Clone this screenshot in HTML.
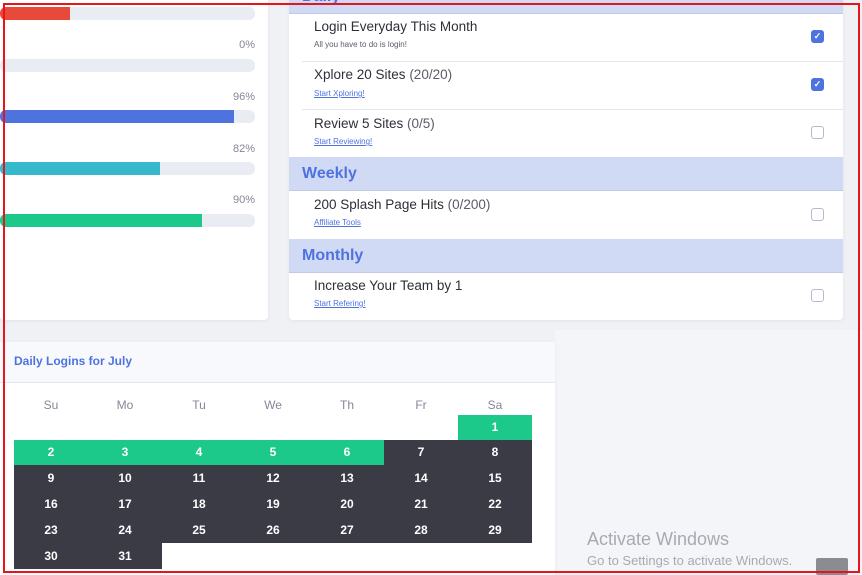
<!DOCTYPE html>
<html><head><meta charset="utf-8"><style>
*{margin:0;padding:0;box-sizing:border-box}
html,body{width:862px;height:575px;overflow:hidden}
body{background:#f0f1f5;font-family:"Liberation Sans",sans-serif;position:relative}
.a{position:absolute}
.card{background:#fff;border-radius:4px;box-shadow:0 1px 4px rgba(0,0,0,.06)}
.track{position:absolute;left:0;width:255px;height:13px;background:#eaecf4;border-radius:6px;overflow:hidden}
.track div{height:100%}
.pct{position:absolute;right:607px;font-size:11px;color:#858796}
.band{position:absolute;left:289px;width:554px;background:#d1daf5;border-bottom:1px solid #c3cbe3;color:#4e73df;font-size:16px;font-weight:bold;padding-left:13px}
.t{position:absolute;left:314px;font-size:13.5px;color:#2e2f37}
.t span{color:#5a5c69}
.s{position:absolute;left:314px;font-size:8px;color:#4e73df;text-decoration:underline}
.cb{position:absolute;left:811px;width:13px;height:13px;border-radius:3px;border:1px solid #b7b9cc;background:#fff}
.cb.on{background:#4e73df;border-color:#4e73df;color:#fff;font-size:9px;line-height:11px;text-align:center;font-weight:bold}
.line{position:absolute;left:302px;width:541px;height:1px;background:#e3e6f0}
.c{position:absolute;width:74px;color:#fff;font-weight:bold;font-size:12px;text-align:center}
.dn{position:absolute;top:398px;width:74px;text-align:center;font-size:12px;color:#858796}
</style></head><body>
<div class="card a" style="left:0;top:-10px;width:268px;height:330px"></div>
<div class="track" style="top:7px"><div style="width:70px;background:#e74a3b"></div></div>
<div class="pct" style="top:39px">0%</div>
<div class="track" style="top:59px"></div>
<div class="pct" style="top:91px">96%</div>
<div class="track" style="top:110px"><div style="width:234px;background:#4e73df"></div></div>
<div class="pct" style="top:143px">82%</div>
<div class="track" style="top:162px"><div style="width:160px;background:#36b9cc"></div></div>
<div class="pct" style="top:194px">90%</div>
<div class="track" style="top:214px"><div style="width:202px;background:#1cc88a"></div></div>

<div class="card a" style="left:289px;top:-10px;width:554px;height:330px"></div>
<div class="band" style="top:-10px;height:24px;line-height:14px">Daily</div>
<div class="t" style="top:19px">Login Everyday This Month</div>
<div class="a" style="left:314px;top:40px;font-size:8px;color:#5a5c69">All you have to do is login!</div>
<div class="cb on" style="top:30px">✓</div>
<div class="line" style="top:61px"></div>
<div class="t" style="top:67px">Xplore 20 Sites <span>(20/20)</span></div>
<div class="s" style="top:89px">Start Xploring!</div>
<div class="cb on" style="top:78px">✓</div>
<div class="line" style="top:109px"></div>
<div class="t" style="top:116px">Review 5 Sites <span>(0/5)</span></div>
<div class="s" style="top:137px">Start Reviewing!</div>
<div class="cb" style="top:126px"></div>
<div class="band" style="top:157px;height:34px;line-height:33px">Weekly</div>
<div class="t" style="top:197px">200 Splash Page Hits <span>(0/200)</span></div>
<div class="s" style="top:218px">Affiliate Tools</div>
<div class="cb" style="top:208px"></div>
<div class="band" style="top:239px;height:34px;line-height:33px">Monthly</div>
<div class="t" style="top:278px">Increase Your Team by 1</div>
<div class="s" style="top:299px">Start Refering!</div>
<div class="cb" style="top:289px"></div>

<div class="a" style="left:555px;top:330px;width:307px;height:245px;background:#f4f5f8"></div>
<div class="card a" style="left:0;top:342px;width:555px;height:233px;border-radius:4px 4px 0 0"></div>
<div class="a" style="left:0;top:342px;width:555px;height:41px;background:#f8f9fc;border-bottom:1px solid #e3e6f0"></div>
<div class="a" style="left:14px;top:354px;font-size:12px;font-weight:bold;color:#4e73df">Daily Logins for July</div>
<div class="dn" style="left:14px">Su</div><div class="dn" style="left:88px">Mo</div><div class="dn" style="left:162px">Tu</div><div class="dn" style="left:236px">We</div><div class="dn" style="left:310px">Th</div><div class="dn" style="left:384px">Fr</div><div class="dn" style="left:458px">Sa</div>
<div id="cal"></div>
<script>
var tops=[415,440,465,491,517,543],h=[25,25,26,26,26,26],out='';
for(var d=1;d<=31;d++){var i=d+5,r=Math.floor(i/7),c=i%7;var bg=d<=6?'#1cc88a':'#3a3b45';
out+='<div class="c" style="left:'+(14+c*74)+'px;top:'+tops[r]+'px;height:'+h[r]+'px;line-height:'+h[r]+'px;background:'+bg+'">'+d+'</div>';}
document.getElementById('cal').innerHTML=out;
</script>
<div class="a" style="left:587px;top:529px;font-size:18px;color:#a8aab2">Activate Windows</div>
<div class="a" style="left:587px;top:553px;font-size:13px;color:#a8aab2">Go to Settings to activate Windows.</div>
<div class="a" style="left:816px;top:558px;width:32px;height:17px;background:#8a8c92;border-radius:2px"></div>
<div class="a" style="left:3px;top:3px;width:857px;height:570px;border:2px solid #e8141c"></div>
</body></html>
